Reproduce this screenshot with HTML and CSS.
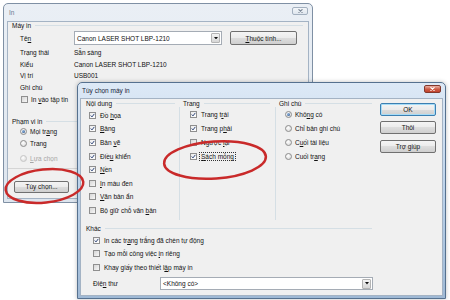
FILE: index.html
```html
<!DOCTYPE html>
<html lang="vi">
<head>
    <meta charset="UTF-8">
    <meta name="viewport" content="width=device-width, initial-scale=1.0">
    <title>In</title>
    <link rel="stylesheet" href="styles.css">
</head>
<body>
    <div class="window win-print">
        <div class="titlebar">
            <span class="title">In</span>
            <span class="close"><svg viewBox="0 0 5 4"><path d="M0.5 0.3 4.5 3.7M4.5 0.3 0.5 3.7"/></svg></span>
        </div>
        <div class="client print-client">
            <div class="group-head"><span>Máy in</span><i></i></div>
            <div class="indent">
                <div class="name-row">
                    <span class="label">Tê<u>n</u></span>
                    <div class="combo printer-combo">
                        <span>Canon LASER SHOT LBP-1210</span>
                        <span class="combo-btn"><svg viewBox="0 0 5 3"><path d="M0 0H5L2.5 3Z"/></svg></span>
                    </div>
                    <div class="button prop-btn"><span><u>T</u>huộc tính...</span></div>
                </div>
                <div class="info first"><span class="label">Trạng thái</span><span>Sẵn sàng</span></div>
                <div class="info"><span class="label">Kiểu</span><span>Canon LASER SHOT LBP-1210</span></div>
                <div class="info"><span class="label">Vị trí</span><span>USB001</span></div>
                <div class="info"><span class="label">Ghi chú</span></div>
                <div class="info file-row"><span class="cb"></span><span>In <u>v</u>ào tập tin</span></div>
            </div>
            <div class="group-head range-head"><span>Phạm vi in</span><i></i></div>
            <div class="indent">
                <div class="radio-row all"><span class="rb on"></span><span>Mọi tr<u>a</u>ng</span></div>
                <div class="radio-row pages"><span class="rb"></span><span>Trang</span></div>
                <div class="radio-row sel disabled"><span class="rb"></span><span><u>L</u>ựa chọn</span></div>
            </div>
            <div class="separator"></div>
            <div class="button options-btn"><span>Tùy chọn...</span></div>
        </div>
    </div>

    <div class="window win-options">
        <div class="titlebar">
            <span class="title">Tùy chọn máy in</span>
            <span class="close"><svg viewBox="0 0 5 4"><path d="M0.5 0.3 4.5 3.7M4.5 0.3 0.5 3.7"/></svg></span>
        </div>
        <div class="client options-client">
            <div class="main">
                <div class="columns">
                    <div class="col col1">
                        <div class="group-head"><span>Nội dung</span><i></i></div>
                        <div class="col-body">
                            <div class="check"><span class="cb on"><svg viewBox="0 0 5 5"><path d="M0.7 2.5 2 3.9 4.3 0.9"/></svg></span><span>Đồ <u>h</u>ọa</span></div>
                            <div class="check"><span class="cb on"><svg viewBox="0 0 5 5"><path d="M0.7 2.5 2 3.9 4.3 0.9"/></svg></span><span><u>B</u>ảng</span></div>
                            <div class="check"><span class="cb on"><svg viewBox="0 0 5 5"><path d="M0.7 2.5 2 3.9 4.3 0.9"/></svg></span><span>Bản <u>v</u>ẽ</span></div>
                            <div class="check"><span class="cb on"><svg viewBox="0 0 5 5"><path d="M0.7 2.5 2 3.9 4.3 0.9"/></svg></span><span>Điề<u>u</u> khiển</span></div>
                            <div class="check"><span class="cb on"><svg viewBox="0 0 5 5"><path d="M0.7 2.5 2 3.9 4.3 0.9"/></svg></span><span><u>N</u>ền</span></div>
                            <div class="check"><span class="cb"></span><span><u>I</u>n màu đen</span></div>
                            <div class="check"><span class="cb"></span><span><u>V</u>ăn bản ẩn</span></div>
                            <div class="check"><span class="cb"></span><span>Bộ giữ chỗ văn <u>b</u>ản</span></div>
                        </div>
                    </div>
                    <div class="col col2">
                        <div class="group-head"><span>Trang</span><i></i></div>
                        <div class="col-body">
                            <div class="check"><span class="cb on"><svg viewBox="0 0 5 5"><path d="M0.7 2.5 2 3.9 4.3 0.9"/></svg></span><span>Trang t<u>r</u>ái</span></div>
                            <div class="check"><span class="cb on"><svg viewBox="0 0 5 5"><path d="M0.7 2.5 2 3.9 4.3 0.9"/></svg></span><span>Trang p<u>h</u>ải</span></div>
                            <div class="check"><span class="cb"></span><span>Ngược <u>l</u>ại</span></div>
                            <div class="check"><span class="cb on"><svg viewBox="0 0 5 5"><path d="M0.7 2.5 2 3.9 4.3 0.9"/></svg></span><span class="focus"><u>S</u>ách mỏng</span></div>
                        </div>
                    </div>
                    <div class="col col3">
                        <div class="group-head"><span>Ghi chú</span><i></i></div>
                        <div class="col-body">
                            <div class="check"><span class="rb on"></span><span>Khô<u>n</u>g có</span></div>
                            <div class="check"><span class="rb"></span><span>Chỉ bản ghi chú</span></div>
                            <div class="check"><span class="rb"></span><span>C<u>u</u>ối tài liệu</span></div>
                            <div class="check"><span class="rb"></span><span>Cuối tr<u>a</u>ng</span></div>
                        </div>
                    </div>
                </div>
                <div class="group-head other-head"><span>Khác</span><i></i></div>
                <div class="other">
                    <div class="check"><span class="cb on"><svg viewBox="0 0 5 5"><path d="M0.7 2.5 2 3.9 4.3 0.9"/></svg></span><span>In các tr<u>a</u>ng trắng đã chèn tự động</span></div>
                    <div class="check"><span class="cb"></span><span>Tạo mỗi công việc <u>i</u>n riêng</span></div>
                    <div class="check"><span class="cb"></span><span>Khay giấy theo thiết l<u>ậ</u>p máy in</span></div>
                    <div class="mail-row">
                        <span class="mail-label">Điệ<u>n</u> thư</span>
                        <div class="combo mail-combo">
                            <span>&lt;Không có&gt;</span>
                            <span class="combo-btn"><svg viewBox="0 0 5 3"><path d="M0 0H5L2.5 3Z"/></svg></span>
                        </div>
                    </div>
                </div>
            </div>
            <div class="side-buttons">
                <div class="button ok-btn"><span>OK</span></div>
                <div class="button cancel-btn"><span>Thôi</span></div>
                <div class="button help-btn"><span>Trợ giúp</span></div>
            </div>
        </div>
    </div>

    <svg class="marks" viewBox="0 0 450 300">
        <ellipse cx="44.5" cy="186" rx="39" ry="16.5" transform="rotate(-6 44.5 186)"/>
        <ellipse cx="215" cy="160" rx="51" ry="18.5" transform="rotate(-4 215 160)"/>
    </svg>
</body>
</html>
```

FILE: styles.css
```css
body {
    margin: 0;
    width: 450px;
    height: 300px;
    position: relative;
    overflow: hidden;
    background-color: #fff;
    font-family: "Liberation Sans", Arial, sans-serif;
    font-size: 6.5px;
    color: #111;
}
u {
    text-decoration-thickness: 0.5px;
    text-underline-offset: 1px;
}

/* windows */
.window {
    position: absolute;
    box-sizing: border-box;
    display: flex;
    flex-direction: column;
    border: 1px solid #7f90a4;
    border-radius: 5px 5px 0 0;
}
.win-print {
    left: 3px;
    top: 3px;
    width: 310px;
    height: 200px;
    padding: 0 3px 3px;
    background: linear-gradient(#eaeff5, #dde5ee);
}
.win-options {
    left: 77px;
    top: 82px;
    width: 369px;
    height: 217px;
    padding: 0 2px 2px;
    border-color: #56718f;
    background: linear-gradient(#dde9f6, #bcd2ea 50%, #9fb9d5);
    box-shadow: 0 0 4px rgba(0, 0, 0, 0.25);
}
.titlebar {
    display: flex;
    align-items: center;
    justify-content: space-between;
    flex-shrink: 0;
    padding-left: 2px;
}
.win-print .titlebar { height: 17px; }
.win-options .titlebar { height: 15px; }
.win-print .title { color: #6a7a8e; }
.win-options .title { color: #15243a; }
.close {
    box-sizing: border-box;
    width: 16px;
    height: 8px;
    border-radius: 2px;
    display: flex;
    align-items: center;
    justify-content: center;
    align-self: flex-start;
}
.close svg {
    width: 5px;
    height: 4px;
    fill: none;
    stroke-width: 1.1;
}
.win-print .close {
    margin: 3px 1px 0 0;
    border: 1px solid #a3b0bf;
    background: linear-gradient(#f3f6f9, #dfe6ee);
}
.win-print .close svg { stroke: #7c8897; }
.win-options .close {
    width: 17px;
    margin: 2px 2px 0 0;
    border: 1px solid #83382c;
    background: linear-gradient(#eab1a4, #cd5a44 55%, #c2442e);
}
.win-options .close svg { stroke: #fff; }
.client {
    flex: 1;
    box-sizing: border-box;
    background-color: #f0f0f0;
    border: 1px solid #a4b3c4;
    display: flex;
}

/* shared controls */
.group-head {
    display: flex;
    align-items: center;
    height: 7px;
}
.group-head i {
    flex: 1;
    height: 1px;
    margin-left: 4px;
    background-color: #d5dfe5;
}
.button {
    box-sizing: border-box;
    display: flex;
    align-items: center;
    justify-content: center;
    border: 1px solid #707070;
    border-radius: 2px;
    background: linear-gradient(#f4f4f4, #ebebeb 50%, #dddddd 50%, #cfcfcf);
}
.combo {
    box-sizing: border-box;
    display: flex;
    align-items: center;
    justify-content: space-between;
    padding-left: 2px;
    border: 1px solid #a5acb5;
    background-color: #fff;
}
.combo-btn {
    box-sizing: border-box;
    width: 9px;
    height: 10px;
    margin-right: 1px;
    display: flex;
    align-items: center;
    justify-content: center;
    border: 1px solid #b4b4b4;
    border-radius: 1px;
    background: linear-gradient(#f4f4f4, #d6d6d6);
}
.combo-btn svg {
    width: 4px;
    height: 2.5px;
    fill: #111;
}
.cb {
    box-sizing: border-box;
    width: 7px;
    height: 7px;
    margin-right: 4px;
    flex-shrink: 0;
    display: flex;
    align-items: center;
    justify-content: center;
    border: 1px solid #8f8f8f;
    background: linear-gradient(135deg, #d6d6d6, #f7f7f7);
}
.cb.on { background: linear-gradient(135deg, #ececec, #ffffff); }
.cb svg {
    width: 5px;
    height: 5px;
    fill: none;
    stroke: #2f467a;
    stroke-width: 1;
}
.rb {
    box-sizing: border-box;
    width: 7px;
    height: 7px;
    margin-right: 3px;
    flex-shrink: 0;
    border-radius: 50%;
    display: flex;
    align-items: center;
    justify-content: center;
    border: 1px solid #8d8d8d;
    background: radial-gradient(circle at 40% 35%, #ffffff, #d4d4d4);
}
.rb.on::after {
    content: "";
    width: 3px;
    height: 3px;
    border-radius: 50%;
    background: radial-gradient(circle at 35% 35%, #93b6de, #1f4c86);
}

/* print dialog */
.print-client {
    flex-direction: column;
    padding: 0 5px 0 4px;
}
.indent { padding-left: 8px; }
.name-row {
    display: flex;
    align-items: center;
    height: 14px;
    margin-top: 2px;
}
.label {
    width: 54px;
    flex-shrink: 0;
}
.printer-combo {
    width: 148px;
    height: 14px;
}
.prop-btn {
    width: 67px;
    height: 14px;
    margin-left: 8px;
}
.info {
    display: flex;
    align-items: center;
    height: 11.7px;
}
.info.first { margin-top: 1.65px; }
.file-row { padding-left: 1px; }
.file-row .cb { margin-right: 3px; }
.range-head { margin-top: 13.35px; }
.range-head i { margin-right: -40px; }
.radio-row {
    display: flex;
    align-items: center;
}
.radio-row.all { height: 12px; }
.radio-row.pages { height: 11.5px; }
.radio-row.sel {
    height: 13px;
    margin-top: 3px;
}
.disabled { color: #a6a6a6; }
.disabled .rb { border-color: #c6c6c6; }
.separator {
    height: 1px;
    margin: 3px -5px 0 -4px;
    background-color: #d5d5d5;
}
.options-btn {
    width: 55px;
    height: 12px;
    margin: 12px 0 0 2px;
}

/* printer options dialog */
.main {
    width: 292px;
    display: flex;
    flex-direction: column;
}
.columns {
    display: flex;
    height: 121px;
}
.col {
    display: flex;
    flex-direction: column;
}
.col .group-head { height: 8px; }
.col1 { width: 98px; }
.col2 { width: 96px; }
.col3 { width: 98px; }
.col1 .group-head { padding: 0 4px 0 5px; }
.col2 .group-head { padding: 0 5px 0 4px; }
.col3 .group-head { padding: 0 1px 0 4px; }
.col-body { flex: 1; }
.col1 .col-body {
    padding: 1.5px 0 0 8px;
}
.col2 .col-body,
.col3 .col-body {
    border-left: 1px solid #d5dfe5;
}
.col2 .col-body { padding-left: 10px; }
.col3 .col-body { padding-left: 9px; }
.check {
    display: flex;
    align-items: center;
    height: 14px;
}
.col1 .check { height: 13.6px; }
.focus {
    outline: 1px dotted #333;
    padding: 0 1px;
    margin-left: -1px;
}
.other-head {
    height: 8px;
    margin-top: 4px;
    padding: 0 1px 0 5px;
}
.other {
    padding: 1.25px 0 0 12px;
}
.other .check { height: 13.5px; }
.mail-row {
    display: flex;
    align-items: center;
    height: 13.5px;
    margin-top: 3px;
}
.mail-label {
    width: 67px;
    flex-shrink: 0;
}
.mail-combo {
    width: 213px;
    height: 13px;
}
.side-buttons {
    width: 56px;
    margin-left: 7px;
    display: flex;
    flex-direction: column;
}
.side-buttons .button { height: 13px; }
.ok-btn {
    margin-top: 4px;
    border-color: #3c7fb1;
    box-shadow: inset 0 0 0 1px #a6dcf7;
}
.cancel-btn { margin-top: 5px; }
.help-btn { margin-top: 6px; }

/* red annotation rings */
.marks {
    position: absolute;
    left: 0;
    top: 0;
    width: 450px;
    height: 300px;
    pointer-events: none;
}
.marks ellipse {
    fill: none;
    stroke: #c92a2a;
    stroke-width: 2.5;
}
```
